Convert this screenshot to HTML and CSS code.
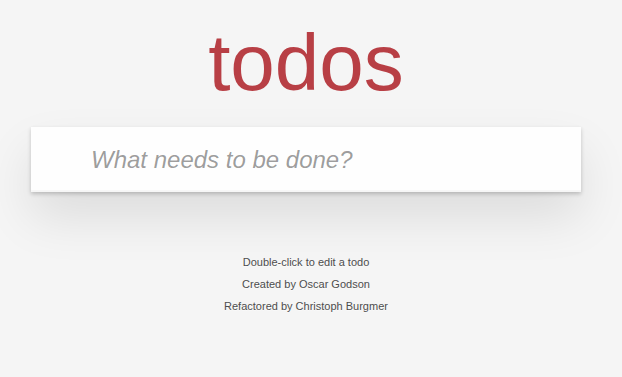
FILE: index.html
```html
<!DOCTYPE html>
<html lang="en">
<head>
    <meta charset="UTF-8">
    <meta name="viewport" content="width=device-width, initial-scale=1.0">
    <title>Todos</title>
    <link rel="stylesheet" href="styles.css">
</head>
<body>
    <div class="page">
        <header class="header">
            <h1>todos</h1>
        </header>
        <section class="todoapp">
            <input class="new-todo" placeholder="What needs to be done?" autofocus>
        </section>
        <footer class="info">
            <p>Double-click to edit a todo</p>
            <p>Created by Oscar Godson</p>
            <p>Refactored by Christoph Burgmer</p>
        </footer>
    </div>
</body>
</html>
```

FILE: styles.css
```css
html, body {
    margin: 0;
    padding: 0;
}
body {
    font-family: "Liberation Sans", Arial, sans-serif;
    font-size: 14px;
    line-height: 1.4em;
    background-color: #f5f5f5;
    color: #111;
    padding: 23px 10px 0 0;
}
.page {
    max-width: 550px;
    margin: 0 auto;
}
.header h1 {
    margin: 0 0 24px;
    font-size: 80px;
    line-height: 80px;
    font-weight: 200;
    text-align: center;
    color: #b83f45;
}
.todoapp {
    background: #fff;
    margin: 0 0 40px;
    box-shadow: 0 2px 4px 0 rgba(0, 0, 0, 0.2), 0 25px 50px 0 rgba(0, 0, 0, 0.1);
}
.new-todo {
    display: block;
    width: 100%;
    height: 65px;
    box-sizing: border-box;
    margin: 0;
    padding: 16px 16px 16px 60px;
    border: none;
    outline: none;
    font-family: inherit;
    font-size: 24px;
    line-height: 1.4em;
    color: inherit;
    background: rgba(0, 0, 0, 0.003);
    box-shadow: inset 0 -2px 1px rgba(0, 0, 0, 0.03);
}
.new-todo::placeholder {
    font-style: italic;
    font-weight: 400;
    color: rgba(0, 0, 0, 0.4);
}
.info {
    margin: 65px auto 0;
    color: #4d4d4d;
    font-size: 11px;
    text-shadow: 0 1px 0 rgba(255, 255, 255, 0.5);
    text-align: center;
}
.info p {
    line-height: 1;
}
```
